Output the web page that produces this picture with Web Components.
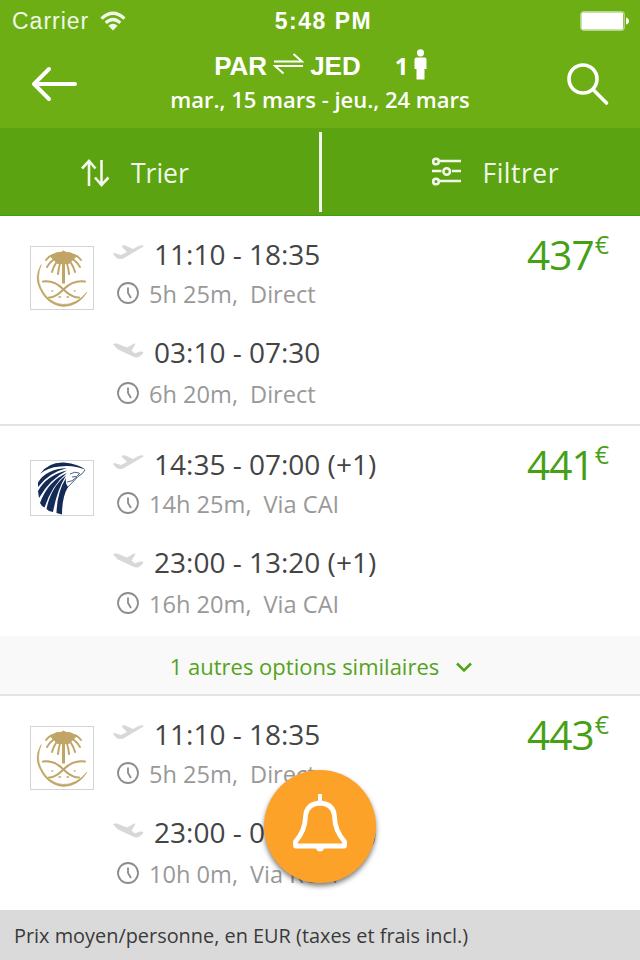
<!DOCTYPE html>
<html lang="fr">
<head>
<meta charset="utf-8">
<title>PAR - JED</title>
<style>
    body {
        margin: 0;
        width: 640px;
        height: 960px;
        overflow: hidden;
        background: #fff;
        font-family: "Open Sans", "Noto Sans", sans-serif;
    }
</style>
</head>
<body>
<flight-app></flight-app>

<script>
const define = (name, html) => {
    customElements.define(name, class extends HTMLElement {
        constructor() {
            super();
            this.attachShadow({ mode: 'open' });
        }

        connectedCallback() {
            this.shadowRoot.innerHTML = typeof html === 'function' ? html(this) : html;
        }
    });
};

define('status-bar', `
    <style>
        :host {
            display: grid;
            grid-template-columns: 1fr auto 1fr;
            align-items: center;
            height: 40px;
            padding: 0 11px 0 12px;
            color: #fff;
            font-family: "Liberation Sans", Arial, sans-serif;
            font-size: 23px;
            line-height: 42px;
        }
        .carrier { display: flex; align-items: center; gap: 11px; opacity: 0.9; letter-spacing: 1px; }
        .time { font-weight: bold; font-size: 23px; letter-spacing: 1.5px; padding-left: 6px; }
        .battery { justify-self: end; }
        svg { display: block; }
    </style>
    <div class="carrier"><span>Carrier</span>
        <svg width="26" height="20" viewBox="0 0 26 20" fill="none" stroke="#fff" stroke-width="3.200">
            <path d="M1.5 7.6Q13-3.2 24.500 7.600M5.700 11.900Q13 5 20.300 11.900"/>
            <path d="M8.300 14.700Q13 10.700 17.700 14.700L13 19.400Z" fill="#fff" stroke="none"/>
        </svg>
    </div>
    <div class="time">5:48 PM</div>
    <svg class="battery" width="49" height="20" viewBox="0 0 49 20" fill="#fff">
        <rect x=".8" y=".8" width="43.400" height="18.400" rx="3" fill="none" stroke="#fff" stroke-opacity=".5" stroke-width="1.400"/>
        <rect x="1.500" y="1.500" width="41.500" height="17" rx="1.500"/>
        <path d="M46 6.500q3 1 3 3.500t-3 3.500Z"/>
    </svg>
`);

define('trip-header', `
    <style>
        :host {
            display: grid;
            grid-template-columns: 1fr auto 1fr;
            height: 88px;
            padding: 0 30px;
            color: #fff;
        }
        .back { align-self: center; }
        .search { align-self: center; justify-self: end; }
        .route {
            display: flex;
            align-items: center;
            height: 46px;
            padding: 6px 0 0 44px;
            box-sizing: border-box;
            font: bold 26px/40px "Liberation Sans", Arial, sans-serif;
        }
        .swap { margin: -4px 6px 0 6px; }
        .count { margin: 0 6px 0 34px; font-family: "Open Sans", sans-serif; font-size: 24px; }
        .person { margin-top: -3px; }
        .dates { font-size: 22px; font-weight: 600; line-height: 27px; text-align: center; white-space: nowrap; }
        svg { display: block; }
    </style>
    <svg class="back" width="50" height="40" viewBox="0 0 50 40" fill="none" stroke="#fff" stroke-width="4" stroke-linecap="round" stroke-linejoin="round">
        <path d="M45 20H4M19 5 4 20l15 15"/>
    </svg>
    <div>
        <div class="route">
            <span>PAR</span>
            <svg class="swap" width="31" height="22" viewBox="0 0 31 22" fill="none" stroke="#fff" stroke-width="1.900">
                <path d="M1 8.500H29L20.500 1M30 13H2l8.500 7.500"/>
            </svg>
            <span>JED</span>
            <span class="count">1</span>
            <svg class="person" width="13" height="32" viewBox="0 0 13 32" fill="#fff">
                <circle cx="6.500" cy="3.800" r="3.600"/>
                <path d="M2.500 8.500h8q2 0 2 2v9.500h-2v10.500h-8V20h-2v-9.500q0-2 2-2Z"/>
            </svg>
        </div>
        <div class="dates">mar., 15 mars - jeu., 24 mars</div>
    </div>
    <svg class="search" width="44" height="44" viewBox="0 0 44 44" fill="none" stroke="#fff" stroke-width="3.600" stroke-linecap="round">
        <circle cx="17" cy="17" r="14"/>
        <path d="M27 27.500 40.500 41"/>
    </svg>
`);

define('tool-bar', `
    <style>
        :host {
            display: grid;
            grid-template-columns: 1fr 3px 1fr;
            align-items: center;
            height: 88px;
            background: #5ba310;
            box-shadow: inset 0 -1px #439d12;
            color: #f1f7ea;
            font-size: 26.5px;
        }
        div { display: flex; align-items: center; line-height: 42px; }
        .sort { padding-left: 81px; gap: 21px; }
        .filter { padding-left: 110px; gap: 21px; letter-spacing: 0.5px; }
        .rule { height: 80px; background: #f3f8ee; }
        svg { display: block; }
        .sort svg { margin-top: 2px; }
        div span { padding-top: 2px; }
    </style>
    <div class="sort">
        <svg width="29" height="28" viewBox="0 0 29 28" fill="none" stroke="currentColor" stroke-width="2.600">
            <path d="M8 27V2M1 9.500 8 2l6.500 7.500M20.500 1v25M14 18.500l6.500 7.500 7-7.500"/>
        </svg>
        <span>Trier</span>
    </div>
    <span class="rule"></span>
    <div class="filter">
        <svg width="30" height="30" viewBox="0 0 30 30" fill="none" stroke="currentColor" stroke-width="2.600">
            <path d="M6 4h23M0 14h9.500M20 14h9M6 24h23"/>
            <circle cx="4" cy="4.500" r="2.800"/>
            <circle cx="14.700" cy="14.500" r="3.300"/>
            <circle cx="4" cy="24.500" r="2.800"/>
        </svg>
        <span>Filtrer</span>
    </div>
`);

const logos = {
    saudia: `
        <svg width="64" height="64" viewBox="0 0 64 64" fill="none" stroke="#c0a567" stroke-linecap="round">
            <rect x=".5" y=".5" width="63" height="63" fill="#fff" stroke="#d4d4d4"/>
            <path d="M33.500 12V37.500" stroke-width="3" stroke-linecap="butt"/>
            <path d="M32 9Q22 6 16 14M31 11Q22 12 17 21M32 12Q25 15 22 26M33 12Q29 17 28 28M35 9Q45 6 51 14M36 11Q45 12 50 21M35 12Q42 15 45 26M34 12Q38 17 39 28" stroke-width="2"/>
            <path d="M21 10.500Q26 5.500 31 6.500 33.500 3.500 36 6.500 41 5.500 46 10.500L39 17.500H28Z" fill="#c0a567" stroke-width="1" stroke-linejoin="round"/>
            <path d="M13 35.500Q24 34 33 43T49 51.500M55 35.500Q43 34 34 43T19 51.500" stroke-width="2"/>
            <path d="M22 45h.5M44.500 45h.5M29 51h1.500M37 51h1.500" stroke-width="1.500"/>
            <path d="M11 19Q4 31 9.500 42Q17 59 33 60.500Q49 60 57 46Q47 58.500 33 58.500Q18 57 11 42Q6 32 11 19Z" fill="#c0a567" stroke-width=".6"/>
        </svg>`,
    egyptair: `
        <svg width="64" height="56" viewBox="0 0 64 56">
            <rect x=".5" y=".5" width="63" height="55" fill="#fff" stroke="#d4d4d4"/>
            <g fill="#142a57">
                <path d="M10 14Q18 2 34 2.500Q49 4 56 10Q43 4.500 30 6.500Q17 7.500 10 14Z"/>
                <path d="M8 22.500Q16 9 37 8Q19 12.500 8 27Z"/>
                <path d="M8 31Q17 15 37 10.500Q20 19 9 38Z"/>
                <path d="M10 43Q18 21 37 13Q22 25 14.500 47.500L12 46Z"/>
                <path d="M16.500 49Q21 27 36 15.500Q27 30 23 52L19 51Z"/>
                <path d="M26.500 53Q27 32 36 18Q35 24 38 27Q32 37 32 54.500Z"/>
            </g>
            <path d="M55 10Q53 14 48 16.500L35 30M40 14q5-3 9-1M42 17q5 1 8-4M37 22q5 0 10-5" fill="none" stroke="#142a57" stroke-opacity=".75"/>
        </svg>`
};

define('airline-logo', el => `
    <style>
        :host { display: block; width: 64px; }
        svg { display: block; }
    </style>
    ${logos[el.getAttribute('airline')]}
`);

const planes = {
    out: 'M0 9Q1 7.500 3 8.500L8 10 14 7 8.500 1.500Q10-.5 12.500.5L20 4 26 .8Q31-.5 30.500 1.500L12 12.500Q7 15.500 3 12.500Z',
    back: 'M0 1.500Q1 0 4 .5L14 4.500 20.500.8Q23 0 22 2L18.500 7.500 22 10.500 26 8.800Q29.500 8 30.500 9.500 26 16 21 14L5 6.500Z'
};

define('flight-leg', el => `
    <style>
        :host { display: block; line-height: 40px; white-space: nowrap; }
        .time { display: flex; align-items: center; height: 39px; gap: 10px; color: #444; font-size: 28px; line-height: 39px; }
        .info { display: flex; align-items: center; height: 40px; gap: 10px; padding-left: 4px; color: #999; font-size: 23.6px; }
        :host([way="back"]) .info { padding-top: 2px; }
        .plane { margin-top: -3px; }
        .clock { margin-top: -2px; }
        .via { padding-left: 2px; }
        svg { display: block; }
    </style>
    <div class="time">
        <svg class="plane" width="31" height="16" viewBox="0 0 31 16" fill="#d8d8d8"><path d="${planes[el.getAttribute('way')]}"/></svg>
        <slot></slot>
    </div>
    <div class="info">
        <svg class="clock" width="22" height="22" viewBox="0 0 22 22" fill="none" stroke="#8c8c8c" stroke-width="1.800">
            <circle cx="11" cy="11" r="10"/>
            <path d="M11 5.500v5.500l3 5"/>
        </svg>
        <slot name="duration"></slot>
        <span class="via"><slot name="via"></slot></span>
    </div>
`);

define('flight-card', el => `
    <style>
        :host {
            display: grid;
            grid-template-columns: 64px 1fr auto;
            column-gap: 19px;
            align-items: start;
            height: 210px;
            padding: 19px 31px 0 30px;
            box-sizing: border-box;
            background: #fff;
        }
        :host([ruled]) { border-bottom: 2px solid #e3e3e3; }
        .legs { display: grid; gap: 19px; }
        .logo { padding-top: 11px; }
        :host([airline="egyptair"]) .logo { padding-top: 15px; }
        .price { display: flex; color: #46a015; font-size: 40.5px; line-height: 40px; letter-spacing: -0.9px; }
        .price sup { margin-left: 1px; font-size: 25px; line-height: 19px; letter-spacing: 0; vertical-align: baseline; }
    </style>
    <div class="logo"><airline-logo airline="${el.getAttribute('airline')}"></airline-logo></div>
    <div class="legs"><slot></slot></div>
    <div class="price"><span>${el.getAttribute('price')}</span><sup>€</sup></div>
`);

define('similar-options', `
    <style>
        :host {
            display: flex;
            align-items: center;
            justify-content: center;
            gap: 17px;
            height: 60px;
            padding: 2px 0 0 2px;
            box-sizing: border-box;
            background: #f9f9f9;
            border-bottom: 2px solid #e3e3e3;
            color: #55a31c;
            font-size: 22px;
        }
        svg { display: block; margin-top: 3px; }
    </style>
    <span><slot></slot></span>
    <svg width="16" height="11" viewBox="0 0 16 11" fill="none" stroke="currentColor" stroke-width="2.600"><path d="m1 1.500 7 7 7-7"/></svg>
`);

define('alert-button', `
    <style>
        :host {
            display: flex;
            align-items: center;
            justify-content: center;
            width: 112px;
            height: 113px;
            border-radius: 50%;
            background: #fca229;
            box-shadow: 0 3px 5px rgb(0 0 0 / 0.5);
        }
        svg { display: block; margin-top: -8px; }
    </style>
    <svg width="56" height="60" viewBox="0 0 56 60" fill="none" stroke="#fff" stroke-width="4.800" stroke-linejoin="round">
        <path d="M28 1v9" stroke-width="4"/>
        <path d="M28 10Q14 11 13.500 24 13 38 3.500 48.500V53H52.500V48.500Q43 38 42.500 24 42 11 28 10Z"/>
        <path d="M23.500 54h9q-1 4.500-4.500 4.500T23.500 54Z" fill="#fff" stroke="none"/>
    </svg>
`);

define('price-note', `
    <style>
        :host {
            display: block;
            height: 50px;
            padding-left: 14px;
            background: #dadada;
            color: #3a3a3a;
            font-size: 19.9px;
            line-height: 52px;
            box-sizing: border-box;
        }
    </style>
    <slot></slot>
`);

define('flight-app', `
    <style>
        :host { display: flex; flex-direction: column; position: relative; width: 640px; height: 960px; overflow: hidden; }
        header { background: #6cae13; }
        main { flex: 1; min-height: 0; overflow: hidden; }
        /* floats over the list */
        alert-button { position: absolute; left: 264px; top: 770px; }
    </style>
    <header>
        <status-bar></status-bar>
        <trip-header></trip-header>
        <tool-bar></tool-bar>
    </header>
    <main>
        <flight-card airline="saudia" price="437" ruled>
            <flight-leg way="out">11:10 - 18:35<span slot="duration">5h 25m,</span><span slot="via">Direct</span></flight-leg>
            <flight-leg way="back">03:10 - 07:30<span slot="duration">6h 20m,</span><span slot="via">Direct</span></flight-leg>
        </flight-card>
        <flight-card airline="egyptair" price="441">
            <flight-leg way="out">14:35 - 07:00 (+1)<span slot="duration">14h 25m,</span><span slot="via">Via CAI</span></flight-leg>
            <flight-leg way="back">23:00 - 13:20 (+1)<span slot="duration">16h 20m,</span><span slot="via">Via CAI</span></flight-leg>
        </flight-card>
        <similar-options>1 autres options similaires</similar-options>
        <flight-card airline="saudia" price="443">
            <flight-leg way="out">11:10 - 18:35<span slot="duration">5h 25m,</span><span slot="via">Direct</span></flight-leg>
            <flight-leg way="back">23:00 - 06:30 (+1)<span slot="duration">10h 0m,</span><span slot="via">Via RUH</span></flight-leg>
        </flight-card>
    </main>
    <price-note>Prix moyen/personne, en EUR (taxes et frais incl.)</price-note>
    <alert-button></alert-button>
`);
</script>
</body>
</html>
